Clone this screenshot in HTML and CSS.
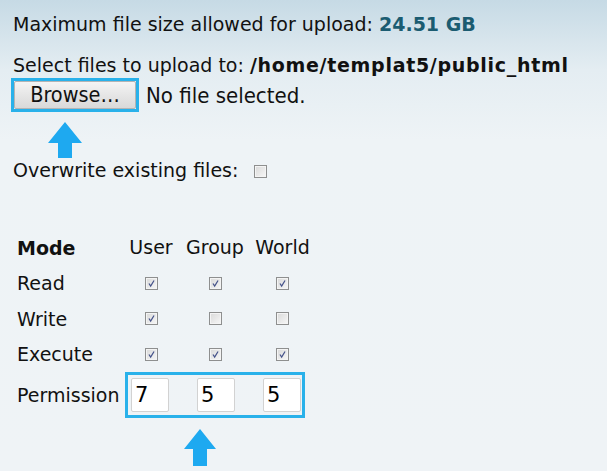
FILE: index.html
```html
<!DOCTYPE html>
<html lang="en">
<head>
    <meta charset="UTF-8">
    <meta name="viewport" content="width=device-width, initial-scale=1.0">
    <title>Upload Files</title>
    <link rel="stylesheet" href="styles.css">
</head>
<body>

    <p class="limit">Maximum file size allowed for upload: <b>24.51 GB</b></p>

    <p class="target">Select files to upload to: <b>/home/templat5/public_html</b></p>

    <!-- Campo de arquivo -->
    <div class="browse-row">
        <span class="ring"><button type="button" class="browse">Browse…</button></span>
        <span class="file-name">No file selected.</span>
    </div>

    <svg class="arrow arrow-browse" width="34" height="36" viewBox="0 0 34 36">
        <path d="M17 0 L34 21 L24 21 L24 36 L10 36 L10 21 L0 21 Z" fill="#1ea9f0"/>
    </svg>

    <p class="overwrite">Overwrite existing files:
        <label class="cb"><input type="checkbox" name="overwrite"><svg viewBox="0 0 13 13"><path d="M3.5 6.5 L5.5 9.5 L9.5 3" /></svg></label>
    </p>

    <!-- Permissoes -->
    <div class="perms">
        <div class="label head">Mode</div>
        <div class="col">User</div>
        <div class="col">Group</div>
        <div class="col">World</div>

        <div class="label">Read</div>
        <div class="col"><label class="cb"><input type="checkbox" checked><svg viewBox="0 0 13 13"><path d="M3.5 6.5 L5.5 9.5 L9.5 3" /></svg></label></div>
        <div class="col"><label class="cb"><input type="checkbox" checked><svg viewBox="0 0 13 13"><path d="M3.5 6.5 L5.5 9.5 L9.5 3" /></svg></label></div>
        <div class="col"><label class="cb"><input type="checkbox" checked><svg viewBox="0 0 13 13"><path d="M3.5 6.5 L5.5 9.5 L9.5 3" /></svg></label></div>

        <div class="label">Write</div>
        <div class="col"><label class="cb"><input type="checkbox" checked><svg viewBox="0 0 13 13"><path d="M3.5 6.5 L5.5 9.5 L9.5 3" /></svg></label></div>
        <div class="col"><label class="cb"><input type="checkbox"><svg viewBox="0 0 13 13"><path d="M3.5 6.5 L5.5 9.5 L9.5 3" /></svg></label></div>
        <div class="col"><label class="cb"><input type="checkbox"><svg viewBox="0 0 13 13"><path d="M3.5 6.5 L5.5 9.5 L9.5 3" /></svg></label></div>

        <div class="label">Execute</div>
        <div class="col"><label class="cb"><input type="checkbox" checked><svg viewBox="0 0 13 13"><path d="M3.5 6.5 L5.5 9.5 L9.5 3" /></svg></label></div>
        <div class="col"><label class="cb"><input type="checkbox" checked><svg viewBox="0 0 13 13"><path d="M3.5 6.5 L5.5 9.5 L9.5 3" /></svg></label></div>
        <div class="col"><label class="cb"><input type="checkbox" checked><svg viewBox="0 0 13 13"><path d="M3.5 6.5 L5.5 9.5 L9.5 3" /></svg></label></div>

        <div class="label">Permission</div>
        <div class="octal">
            <input type="text" value="7">
            <input type="text" value="5">
            <input type="text" value="5">
        </div>
    </div>

    <svg class="arrow arrow-perms" width="32" height="37" viewBox="0 0 32 37">
        <path d="M16 0 L32 20 L23 20 L23 37 L9 37 L9 20 L0 20 Z" fill="#1ea9f0"/>
    </svg>

</body>
</html>
```

FILE: styles.css
```css
/* Estilos gerais */
body {
    margin: 0;
    padding: 14px 13px 0;
    min-height: 471px;
    box-sizing: border-box;
    font-family: "DejaVu Sans", Verdana, sans-serif;
    font-size: 19px;
    color: #111;
    background: linear-gradient(#c6dae5 0, #e4edf2 70px, #eef3f6 140px, #eff3f6 100%);
}

p {
    margin: 0;
    line-height: 21px;
}

.target b {
    letter-spacing: 0.7px;
}

.limit b {
    color: #1b5c71;
}

.target {
    margin-top: 20px;
}

/* Campo de arquivo */
.browse-row {
    display: flex;
    align-items: center;
    gap: 7px;
    margin-top: 2px;
    margin-left: -2px;
}

.ring {
    display: flex;
    border: 3px solid #29b1ea;
}

.browse {
    width: 122px;
    height: 28px;
    padding: 0;
    border: 1px solid #b4b4b4;
    border-radius: 2px;
    background: linear-gradient(#f4f4f4, #e6e6e6 50%, #d9d9d9);
    font-family: "DejaVu Sans Condensed", "DejaVu Sans", sans-serif;
    font-size: 21.5px;
    color: #111;
    line-height: 26px;
}

.file-name {
    font-family: "DejaVu Sans Condensed", "DejaVu Sans", sans-serif;
    font-size: 22px;
    color: #111;
}

.arrow {
    display: block;
}

.arrow-browse {
    margin: 10px 0 0 35px;
}

.overwrite {
    margin-top: 2px;
}

.overwrite .cb {
    margin-left: 10px;
    vertical-align: -1px;
}

/* Checkbox */
.cb {
    display: inline-block;
    position: relative;
    width: 13px;
    height: 13px;
    box-sizing: border-box;
    border: 1px solid #8e8f8f;
    background: linear-gradient(135deg, #d9d9d9, #f7f7f7);
    box-shadow: inset 0 0 0 1px #f4f4f4;
}

.cb input {
    position: absolute;
    opacity: 0;
    margin: 0;
    width: 100%;
    height: 100%;
}

.cb svg {
    display: none;
    width: 11px;
    height: 11px;
    fill: none;
    stroke: #46538a;
    stroke-width: 1.5;
}

.cb input:checked + svg {
    display: block;
}

/* Permissoes */
.perms {
    display: grid;
    grid-template-columns: 110px 56px 72px 63px;
    grid-template-rows: 35.5px 35.5px 35.5px 35.5px 46px;
    align-items: center;
    margin-top: 49px;
}

.perms .label {
    padding-left: 4px;
}

.perms .head {
    font-weight: bold;
}

.perms .col {
    text-align: center;
    line-height: 0;
}

.perms .col:nth-child(-n+4) {
    line-height: 21px;
}

.octal {
    grid-column: 2 / 5;
    justify-self: start;
    display: flex;
    gap: 28px;
    width: 180px;
    margin-left: 2px;
    padding: 3px 1px 3px 3px;
    box-sizing: border-box;
    border: 3px solid #29b1ea;
}

.octal input {
    width: 38px;
    height: 34px;
    box-sizing: border-box;
    padding: 0 0 0 3px;
    border: 1px solid #d2d2d2;
    border-radius: 2px;
    background: #fff;
    font-family: "DejaVu Sans", Verdana, sans-serif;
    font-size: 21px;
    color: #000;
}

.arrow-perms {
    margin: 11px 0 0 171px;
}
```
